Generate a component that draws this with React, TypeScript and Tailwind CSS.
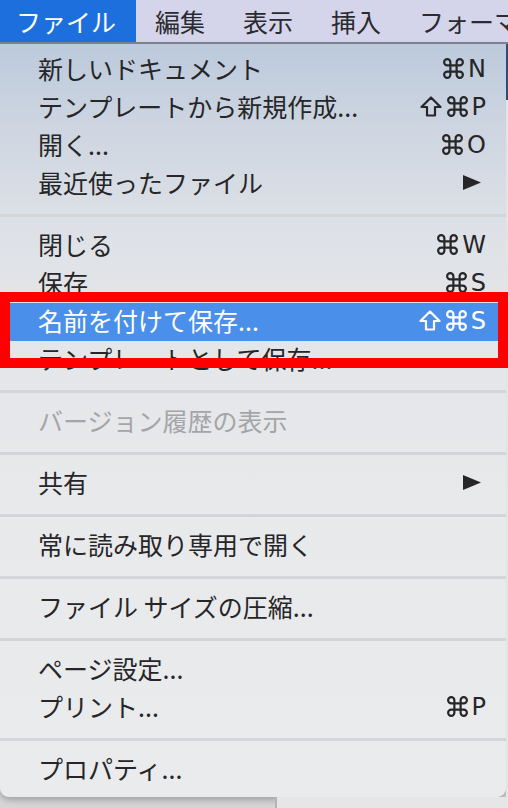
import React from "react";
import { Command } from "lucide-react";

type Item = {
  label: string;
  keys?: string[];
  submenu?: boolean;
  disabled?: boolean;
  active?: boolean;
};

const sections: Item[][] = [
  [
    { label: "新しいドキュメント", keys: ["⌘", "N"] },
    { label: "テンプレートから新規作成...", keys: ["⇧", "⌘", "P"] },
    { label: "開く...", keys: ["⌘", "O"] },
    { label: "最近使ったファイル", submenu: true },
  ],
  [
    { label: "閉じる", keys: ["⌘", "W"] },
    { label: "保存", keys: ["⌘", "S"] },
    { label: "名前を付けて保存...", keys: ["⇧", "⌘", "S"], active: true },
    { label: "テンプレートとして保存..." },
  ],
  [{ label: "バージョン履歴の表示", disabled: true }],
  [{ label: "共有", submenu: true }],
  [{ label: "常に読み取り専用で開く" }],
  [{ label: "ファイル サイズの圧縮..." }],
  [
    { label: "ページ設定..." },
    { label: "プリント...", keys: ["⌘", "P"] },
  ],
  [{ label: "プロパティ..." }],
];

const menus = ["編集", "表示", "挿入", "フォーマット"];

function ShiftIcon() {
  return (
    <svg width="22" height="21" viewBox="0 0 22 21" fill="none" stroke="currentColor" strokeWidth="2.2" strokeLinejoin="round">
      <polygon points="11,1.5 20.5,11 15,11 15,19.5 7,19.5 7,11 1.5,11" />
    </svg>
  );
}

function Shortcut({ keys }: { keys: string[] }) {
  return (
    <span className="flex items-center font-['DejaVu_Sans',sans-serif] text-[24px] leading-none">
      {keys.map((k, i) =>
        k === "⇧" ? (
          <span key={i} className="mr-[3px] flex" aria-label="⇧">
            <ShiftIcon />
          </span>
        ) : k === "⌘" ? (
          <span key={i} className="mr-[2px] flex" aria-label="⌘">
            <Command size={25} strokeWidth={2.1} />
          </span>
        ) : (
          <span key={i}>{k}</span>
        ),
      )}
    </span>
  );
}

function Row({ item }: { item: Item }) {
  const tone = item.active
    ? "bg-[#4a8fea] text-white"
    : item.disabled
      ? "text-[#a4a5a8]"
      : "text-[#262628]";
  return (
    <div className={`flex h-[38px] items-center justify-between pb-[3px] pl-[38px] pr-[20px] ${tone}`}>
      <span className="whitespace-nowrap text-[25px] leading-none">{item.label}</span>
      {item.keys && <Shortcut keys={item.keys} />}
      {item.submenu && (
        <svg width="18" height="15" viewBox="0 0 18 15" className="mr-[5px]">
          <polygon points="0,0 18,7.5 0,15" fill="#262628" />
        </svg>
      )}
    </div>
  );
}

export default function App() {
  return (
    <div
      lang="ja"
      className="relative flex h-[808px] w-[508px] flex-col overflow-hidden bg-[#d6d6d6] font-['Noto_Sans_CJK_JP',sans-serif]"
    >
      {/* menu bar */}
      <div className="flex h-[44px] shrink-0 items-center overflow-hidden whitespace-nowrap border-b-2 border-[#7f8492] bg-[#d4d5eb] text-[25px] leading-none text-[#2a2a30]">
        <div className="flex h-full items-center bg-[#1e6fde] pl-[16px] pr-[20px] text-white">ファイル</div>
        {menus.map((m) => (
          <div key={m} className="px-[19px]">
            {m}
          </div>
        ))}
      </div>

      <div className="flex flex-1">
        {/* dropdown */}
        <div className="flex h-[753px] w-[506px] shrink-0 flex-col rounded-b-[9px] bg-[linear-gradient(180deg,#bccadc_0%,#cfd6e1_12%,#dde1e7_24%,#e4e5e8_36%,#e8e9eb_60%,#eaebed_100%)] pb-[7px] pt-[7px] shadow-[0_3px_6px_rgba(0,0,0,0.25)]">
          {sections.map((sec, si) => (
            <React.Fragment key={si}>
              {si > 0 && (
                <div className="flex h-[24px] items-center">
                  <div className="h-[3px] w-full bg-[#d4d5d9]" />
                </div>
              )}
              {sec.map((item) => (
                <Row key={item.label} item={item} />
              ))}
            </React.Fragment>
          ))}
        </div>
        <div className="flex flex-1 flex-col">
          <div className="h-[56px] bg-[#2d4c7c]" />
          <div className="flex-1 bg-[#e4e4e4]" />
        </div>
      </div>

      {/* window behind, under the menu */}
      <div className="absolute bottom-0 left-[275px] h-[11px] w-[233px] border-l-2 border-[#b5b5b5] bg-[#e6e6e6]" />

      {/* annotation */}
      <div className="pointer-events-none absolute left-0 top-[292px] h-[76px] w-[508px] border-[10px] border-[#ff0000]" />
    </div>
  );
}
